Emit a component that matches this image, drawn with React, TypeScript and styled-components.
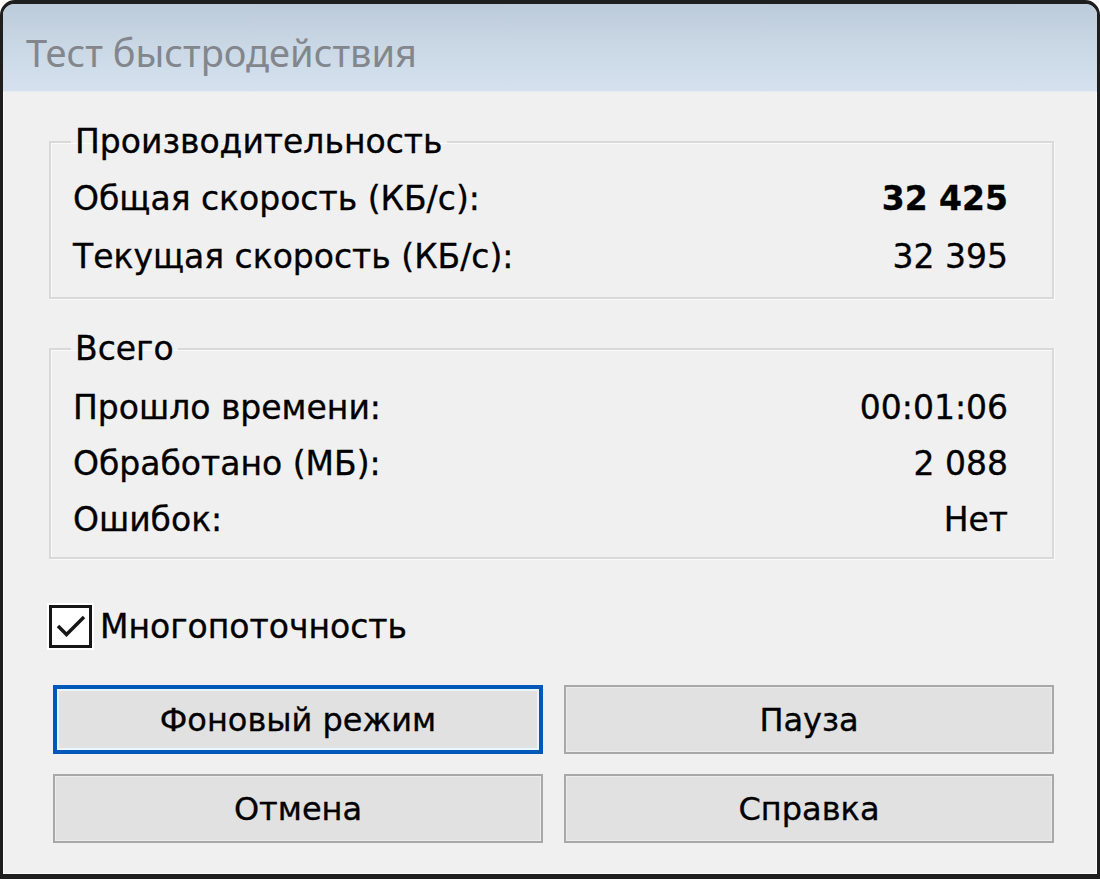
import React from 'react'
import styled, { createGlobalStyle } from 'styled-components'

const GlobalStyle = createGlobalStyle`
  html, body {
    margin: 0;
    padding: 0;
    background: #ffffff;
  }
  * {
    box-sizing: border-box;
  }
`

const Window = styled.div`
  width: 1100px;
  height: 879px;
  display: flex;
  flex-direction: column;
  border: 3px solid #1e1e1e;
  border-top-width: 4px;
  border-bottom-width: 5px;
  border-radius: 15px 15px 0 0;
  overflow: hidden;
  background: #f0f0f0;
  font-family: "DejaVu Sans", Tahoma, sans-serif;
  color: #000;
  -webkit-text-stroke: 0.35px #000;
`

const TitleBar = styled.div`
  height: 88px;
  flex: none;
  display: flex;
  align-items: center;
  padding: 8px 0 0 23px;
  background: linear-gradient(to bottom, #bccbd9 0%, #c9d7e5 45%, #d5e1ee 100%);
  border-bottom: 1px solid #e4ebf2;
`

const Title = styled.span`
  font-family: "Noto Sans", "Open Sans", sans-serif;
  font-size: 38px;
  color: #83878d;
  -webkit-text-stroke: 0;
`

const Body = styled.div`
  flex: 1;
  display: flex;
  flex-direction: column;
  padding: 30px 42px 0 45px;
  border-left: 1px solid #fbfbfb;
  border-right: 1px solid #fbfbfb;
  border-bottom: 1px solid #fbfbfb;
`

const Group = styled.fieldset<{ $top: number; $bottom: number }>`
  margin: 0;
  padding: ${p => p.$top}px 44px ${p => p.$bottom}px 22px;
  border: 2px solid #d9d9d9;
  box-shadow: inset 1px 1px 0 #fafafa, 1px 1px 0 #fafafa;
  display: flex;
  flex-direction: column;
  & + & {
    margin-top: 30px;
  }
`

const Legend = styled.legend`
  padding: 0 4px;
  margin-left: -2px;
  font-size: 33px;
  line-height: 40px;
`

const Row = styled.div<{ $h: number }>`
  height: ${p => p.$h}px;
  display: flex;
  align-items: center;
  justify-content: space-between;
  font-size: 33px;
`

const Value = styled.span<{ $bold?: boolean }>`
  font-weight: ${p => (p.$bold ? 700 : 400)};
`

const CheckRow = styled.label`
  margin-top: 45px;
  height: 44px;
  display: flex;
  align-items: center;
  gap: 8px;
  font-size: 33px;
`

const Box = styled.span`
  width: 43px;
  height: 43px;
  flex: none;
  border: 3px solid #161616;
  background: #ffffff;
  box-shadow: 0 0 0 2px #ffffff;
  display: flex;
  align-items: center;
  justify-content: center;
`

const Buttons = styled.div`
  margin: 37px 0 0 4px;
  display: grid;
  grid-template-columns: 1fr 1fr;
  column-gap: 21px;
  row-gap: 20px;
`

const Button = styled.button<{ $focused?: boolean }>`
  height: 69px;
  margin: 0;
  padding: 0;
  font-family: inherit;
  font-size: 32px;
  color: #000;
  -webkit-text-stroke: 0.35px #000;
  background: #e1e1e1;
  border: ${p => (p.$focused ? '4px solid #0058b8' : '2px solid #a8a8a8')};
  box-shadow: ${p =>
    p.$focused ? 'inset 0 0 0 2px #e8f6ff' : 'inset 0 0 0 1px #ececec'};
  cursor: default;
`

const Check = () => (
  <svg width="34" height="34" viewBox="0 0 34 34">
    <path d="M4 17 L12.5 25.5 L30 8" fill="none" stroke="#161616" strokeWidth="3.5" />
  </svg>
)

const perf = [
  { label: 'Общая скорость (КБ/с):', value: '32 425', bold: true },
  { label: 'Текущая скорость (КБ/с):', value: '32 395' },
]

const total = [
  { label: 'Прошло времени:', value: '00:01:06' },
  { label: 'Обработано (МБ):', value: '2 088' },
  { label: 'Ошибок:', value: 'Нет' },
]

const App = () => {
  return (
    <>
      <GlobalStyle />
      <Window>
        <TitleBar>
          <Title>Тест быстродействия</Title>
        </TitleBar>
        <Body>
          <Group $top={7} $bottom={12}>
            <Legend>Производительность</Legend>
            {perf.map(r => (
              <Row key={r.label} $h={58}>
                <span>{r.label}</span>
                <Value $bold={r.bold}>{r.value}</Value>
              </Row>
            ))}
          </Group>
          <Group $top={10} $bottom={10}>
            <Legend>Всего</Legend>
            {total.map(r => (
              <Row key={r.label} $h={56}>
                <span>{r.label}</span>
                <Value>{r.value}</Value>
              </Row>
            ))}
          </Group>
          <CheckRow>
            <Box>
              <Check />
            </Box>
            Многопоточность
          </CheckRow>
          <Buttons>
            <Button $focused>Фоновый режим</Button>
            <Button>Пауза</Button>
            <Button>Отмена</Button>
            <Button>Справка</Button>
          </Buttons>
        </Body>
      </Window>
    </>
  )
}

export default App
